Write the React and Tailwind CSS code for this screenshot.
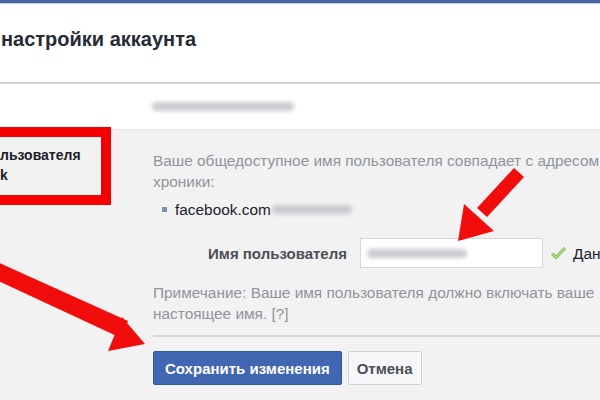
import React from "react";

function Arrows() {
    return (
        <svg className="absolute inset-0 pointer-events-none" width="600" height="400" viewBox="0 0 600 400">
            <g fill="#f20d0d">
                <polygon points="514,168 524,177 487,217 477,208" />
                <polygon points="458,241 464,204 494,231" />
                <polygon points="-10,277 -3,262 128,321 121,338" />
                <polygon points="145,344 122,317 108,351" />
            </g>
        </svg>
    );
}

function Blur({ w, className = "" }) {
    return (
        <span
            className={`inline-block h-[9px] rounded-full bg-[#c9cbd0] blur-[2px] align-middle ${className}`}
            style={{ width: w }}
        />
    );
}

export default function App() {
    return (
        <div className="relative w-[600px] h-[400px] overflow-hidden bg-white" style={{ fontFamily: '"Liberation Sans", Arial, sans-serif' }}>
            <div className="h-[3px] bg-[#4a64a1]" />
            <div className="h-px bg-[#c6d4ea]" />
            <div className="h-[78px] flex items-center pl-[1px] pb-[8px]">
                <h1 className="text-[20px] font-bold text-[#262b36] leading-none">настройки аккаунта</h1>
            </div>
            <div className="h-[2px] bg-[#cfcfcf]" />
            <div className="h-[45px] flex items-center pl-[152px]">
                <Blur w={142} />
            </div>
            <div className="relative h-[271px] bg-[#f2f2f2] border-t border-[#e3e3e3] flex">
                <div className="w-[153px] shrink-0 pt-[15px] text-[14px] font-bold text-[#1d2129] leading-[20px]">
                    <div>льзователя</div>
                    <div>k</div>
                </div>
                <div className="flex-1 pt-[20px] text-[15.4px] leading-[21px]">
                    <p className="text-[#90949c] whitespace-nowrap">Ваше общедоступное имя пользователя совпадает с адресом</p>
                    <p className="text-[#90949c]">хроники:</p>
                    <div className="mt-[7px] flex items-center text-[#1d2129]">
                        <span className="ml-[9px] mr-[8px] w-[5px] h-[5px] bg-[#7b8fb5]" />
                        <span>facebook.com</span>
                        <Blur w={80} className="ml-[1px]" />
                    </div>
                    <div className="mt-[18px] flex items-center">
                        <label className="w-[194px] text-right font-bold text-[#4b4f56] text-[15px]">Имя пользователя</label>
                        <div className="ml-[13px] w-[183px] h-[30px] bg-white border border-[#d5d7db] flex items-center pl-[6px]">
                            <Blur w={100} />
                        </div>
                        <svg className="ml-[7px]" width="17" height="16" viewBox="0 0 17 16">
                            <path d="M2 8.5 L6 12.5 L15 3" fill="none" stroke="#7cb342" strokeWidth="3" strokeLinejoin="round" />
                            <path d="M2 8.5 L6 12.5 L15 3" fill="none" stroke="#b8e08c" strokeWidth="1.2" strokeLinejoin="round" />
                        </svg>
                        <span className="ml-[6px] text-[#1d2129] whitespace-nowrap">Данные</span>
                    </div>
                    <p className="mt-[14px] text-[#90949c] whitespace-nowrap">Примечание: Ваше имя пользователя должно включать ваше</p>
                    <p className="text-[#90949c]">настоящее имя. [?]</p>
                    <div className="mt-[11px] h-[2px] bg-[#d6d6d6]" />
                    <div className="mt-[14px] flex gap-[6px]">
                        <button className="h-[34px] px-[11px] bg-[#4267b2] border border-[#365899] rounded-[2px] text-white font-bold text-[15px]">
                            Сохранить изменения
                        </button>
                        <button className="h-[34px] px-[8px] bg-[#f6f7f9] border border-[#ced0d4] rounded-[2px] text-[#4b4f56] font-bold text-[15px]">
                            Отмена
                        </button>
                    </div>
                </div>
                <div className="absolute left-[-20px] top-[-3px] w-[131px] h-[78px] border-[10px] border-[#f50000]" />
            </div>
            <div className="h-[5px] bg-white" />
            <Arrows />
        </div>
    );
}
